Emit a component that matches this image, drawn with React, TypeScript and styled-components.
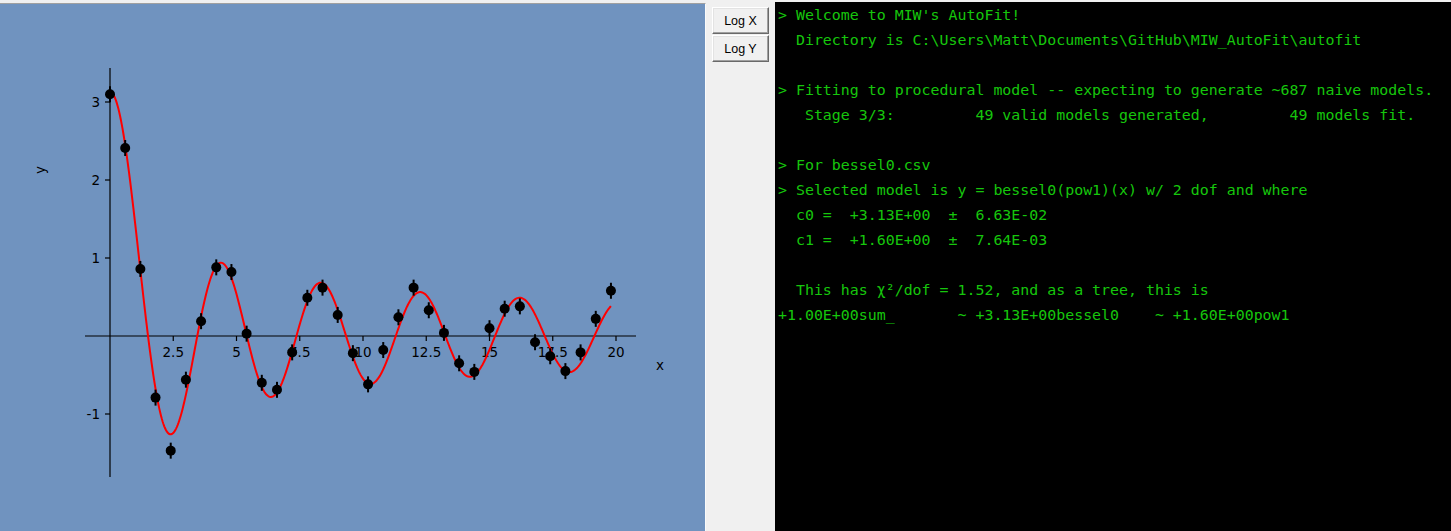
import React from "react";
import styled, { createGlobalStyle } from "styled-components";

const GlobalStyle = createGlobalStyle`
  html, body {
    margin: 0;
    padding: 0;
    background: #f0f0f0;
    overflow: hidden;
  }
`;

// plot mapping, in page pixels
const X0 = 110;
const Y0 = 336;
const SX = 25.3;
const SY = 78;
const px = (x: number) => X0 + SX * x;
const py = (y: number) => Y0 - SY * y;

// Numerical Recipes style J0
function bessj0(x: number) {
  const ax = Math.abs(x);
  if (ax < 8) {
    const y = x * x;
    const a1 =
      57568490574.0 +
      y * (-13362590354.0 + y * (651619640.7 + y * (-11214424.18 + y * (77392.33017 + y * -184.9052456))));
    const a2 =
      57568490411.0 + y * (1029532985.0 + y * (9494680.718 + y * (59272.64853 + y * (267.8532712 + y))));
    return a1 / a2;
  }
  const z = 8 / ax;
  const y = z * z;
  const xx = ax - 0.785398164;
  const a1 = 1 + y * (-0.1098628627e-2 + y * (0.2734510407e-4 + y * (-0.2073370639e-5 + y * 0.2093887211e-6)));
  const a2 =
    -0.1562499995e-1 + y * (0.1430488765e-3 + y * (-0.6911147651e-5 + y * (0.7621095161e-6 - y * 0.934935152e-7)));
  return Math.sqrt(0.636619772 / ax) * (Math.cos(xx) * a1 - z * Math.sin(xx) * a2);
}

const model = (x: number) => 3.13 * bessj0(1.6 * x);

const DATA = [
  3.1, 2.41, 0.86, -0.79, -1.47, -0.56, 0.19, 0.88, 0.82, 0.03, -0.6, -0.69, -0.21, 0.49, 0.62, 0.27, -0.22,
  -0.62, -0.18, 0.24, 0.62, 0.33, 0.04, -0.35, -0.46, 0.1, 0.35, 0.38, -0.08, -0.26, -0.45, -0.21, 0.22, 0.58,
];

const X_TICKS = ["2.5", "5", "7.5", "10", "12.5", "15", "17.5", "20"];
const Y_TICKS = ["-1", "1", "2", "3"];

const curvePath = (() => {
  const pts: string[] = [];
  const n = 600;
  for (let i = 0; i <= n; i++) {
    const x = (19.8 * i) / n;
    pts.push(`${px(x).toFixed(2)},${py(model(x)).toFixed(2)}`);
  }
  return "M" + pts.join("L");
})();

const LINES = [
  "> Welcome to MIW's AutoFit!",
  "  Directory is C:\\Users\\Matt\\Documents\\GitHub\\MIW_AutoFit\\autofit",
  "",
  "> Fitting to procedural model -- expecting to generate ~687 naive models.",
  "   Stage 3/3:         49 valid models generated,         49 models fit.",
  "",
  "> For bessel0.csv",
  "> Selected model is y = bessel0(pow1)(x) w/ 2 dof and where",
  "  c0 =  +3.13E+00  \u00b1  6.63E-02",
  "  c1 =  +1.60E+00  \u00b1  7.64E-03",
  "",
  "  This has \u03c7\u00b2/dof = 1.52, and as a tree, this is",
  "+1.00E+00sum_       ~ +3.13E+00bessel0    ~ +1.60E+00pow1",
];

const Plot = () => (
  <PlotSvg viewBox="0 4 705 527" width={705} height={527}>
    <g stroke="#000" strokeWidth={1.2}>
      <line x1={85} y1={Y0} x2={636} y2={Y0} />
      <line x1={X0} y1={68} x2={X0} y2={477} />
      {X_TICKS.map((t) => (
        <line key={t} x1={px(+t)} y1={Y0} x2={px(+t)} y2={Y0 + 5} />
      ))}
      {Y_TICKS.map((t) => (
        <line key={t} x1={X0 - 5} y1={py(+t)} x2={X0} y2={py(+t)} />
      ))}
    </g>
    <g fontFamily="'DejaVu Sans', sans-serif" fontSize={13.5} fill="#000">
      {X_TICKS.map((t) => (
        <text key={t} x={px(+t)} y={352} textAnchor="middle" dominantBaseline="central">
          {t}
        </text>
      ))}
      {Y_TICKS.map((t) => (
        <text key={t} x={100} y={py(+t)} textAnchor="end" dominantBaseline="central">
          {t}
        </text>
      ))}
      <text x={660} y={365} textAnchor="middle" dominantBaseline="central">
        x
      </text>
      <text x={40} y={170} textAnchor="middle" dominantBaseline="central" transform="rotate(-90 40 170)">
        y
      </text>
    </g>
    <path d={curvePath} fill="none" stroke="#ff0000" strokeWidth={2} />
    <g fill="#000" stroke="#000">
      {DATA.map((v, i) => {
        const cx = px(i * 0.6);
        const cy = py(v);
        return (
          <g key={i}>
            <line x1={cx} y1={cy - 8} x2={cx} y2={cy + 8} strokeWidth={2} />
            <circle cx={cx} cy={cy} r={5} stroke="none" />
          </g>
        );
      })}
    </g>
  </PlotSvg>
);

const App = () => {
  return (
    <>
      <GlobalStyle />
      <Root>
        <PlotPanel>
          <Plot />
        </PlotPanel>
        <SidePanel>
          <ToolButton>Log X</ToolButton>
          <ToolButton>Log Y</ToolButton>
        </SidePanel>
        <Terminal>
          {LINES.map((l, i) => (
            <Line key={i}>{l || " "}</Line>
          ))}
        </Terminal>
      </Root>
    </>
  );
};

const Root = styled.div`
  display: flex;
  align-items: stretch;
  width: 1451px;
  height: 531px;
  padding-top: 2px;
  box-sizing: border-box;
  background: #f0f0f0;
`;

const PlotPanel = styled.div`
  width: 705px;
  margin-top: 1px;
  border-top: 1px solid #a0a0a0;
  border-right: 1px solid #fafafa;
  background: #7093bf;
  overflow: hidden;
`;

const PlotSvg = styled.svg`
  display: block;
`;

const SidePanel = styled.div`
  width: 69px;
  display: flex;
  flex-direction: column;
  align-items: flex-start;
  gap: 1px;
  padding: 5px 0 0 6px;
  box-sizing: border-box;
`;

const ToolButton = styled.button`
  width: 57px;
  height: 27px;
  padding: 0;
  margin: 0;
  background: #f0f0f0;
  border: 1px solid;
  border-color: #ffffff #696969 #696969 #ffffff;
  box-shadow: inset -1px -1px 0 #a0a0a0, inset 1px 1px 0 #e3e3e3;
  font-family: "Liberation Sans", Arial, sans-serif;
  font-size: 12.5px;
  color: #000;
`;

const Terminal = styled.div`
  flex: 1;
  background: #000;
  padding: 1px 0 0 3px;
  box-sizing: border-box;
  overflow: hidden;
`;

const Line = styled.div`
  font-family: "DejaVu Sans Mono", "Liberation Mono", monospace;
  font-size: 14.92px;
  line-height: 25px;
  height: 25px;
  color: #16c60c;
  white-space: pre;
`;

export default App;
